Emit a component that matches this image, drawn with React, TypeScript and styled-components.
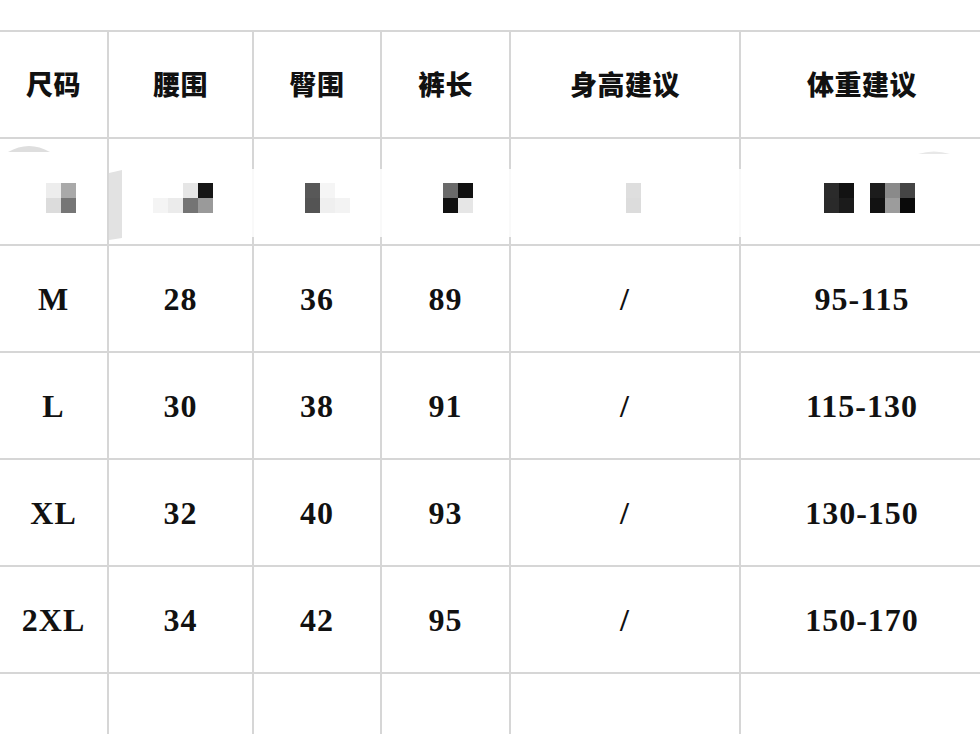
import styled, { createGlobalStyle } from 'styled-components'

const GlobalStyle = createGlobalStyle`
  html, body {
    margin: 0;
    padding: 0;
    background: #ffffff;
    overflow: hidden;
  }
`

const LINE = '#d6d6d6'

const Page = styled.div`
  width: 980px;
  height: 734px;
  padding-top: 30px;
  box-sizing: border-box;
  background: #ffffff;
  overflow: hidden;
`

const Table = styled.div`
  display: grid;
  grid-template-columns: 109px 145px 128px 129px 230px 244px;
  grid-auto-rows: 107px;
  width: 985px;
  border-top: 2px solid ${LINE};
`

const Cell = styled.div<{ $faint?: boolean }>`
  position: relative;
  display: flex;
  align-items: center;
  justify-content: center;
  box-sizing: border-box;
  border-right: 2px solid ${LINE};
  border-bottom: 2px solid ${LINE};
  color: #111111;

  ${p =>
    p.$faint &&
    `
    &::after {
      content: '';
      position: absolute;
      right: -2px;
      top: 30px;
      width: 2px;
      height: 68px;
      background: rgba(255, 255, 255, 0.85);
    }
  `}
`

const HeadText = styled.span`
  font-family: 'Noto Sans CJK SC', 'Noto Sans', sans-serif;
  font-weight: 900;
  font-size: 27px;
  letter-spacing: 0.5px;
  margin-top: -2px;
`

const DataText = styled.span`
  font-family: 'Liberation Serif', 'Times New Roman', serif;
  font-weight: 700;
  font-size: 32px;
  letter-spacing: 1px;
  margin-top: 1px;
`

const Mosaic = styled.svg`
  display: block;
  width: 100%;
  height: 100%;
`

type Tile = [number, number, string]

interface MosaicSpec {
  tiles: Tile[]
  extra?: React.ReactNode
}

const TILE = 15
const TOP = 44

const mosaics: MosaicSpec[] = [
  {
    tiles: [
      [46, 0, '#ededed'],
      [46, 1, '#dcdcdc'],
      [61, 0, '#a9a9a9'],
      [61, 1, '#767676'],
    ],
    extra: <path d="M8 13 Q29 1 50 13 Z" fill="#dedede" />,
  },
  {
    tiles: [
      [44, 1, '#f4f4f4'],
      [59, 1, '#ebebeb'],
      [74, 0, '#e6e6e6'],
      [74, 1, '#747474'],
      [89, 0, '#161616'],
      [89, 1, '#9a9a9a'],
    ],
    extra: <path d="M0 34 L13 31 L13 99 L0 101 Z" fill="#e2e2e2" />,
  },
  {
    tiles: [
      [51, 0, '#585858'],
      [51, 1, '#545454'],
      [66, 0, '#f5f5f5'],
      [66, 1, '#efefef'],
      [81, 1, '#f3f3f3'],
    ],
  },
  {
    tiles: [
      [61, 0, '#6a6a6a'],
      [61, 1, '#111111'],
      [76, 0, '#111111'],
      [76, 1, '#e6e6e6'],
    ],
  },
  {
    tiles: [
      [115, 0, '#dedede'],
      [115, 1, '#dcdcdc'],
    ],
  },
  {
    tiles: [
      [83, 0, '#2b2b2b'],
      [83, 1, '#2a2a2a'],
      [98, 0, '#121212'],
      [98, 1, '#1b1b1b'],
      [129, 0, '#1c1c1c'],
      [129, 1, '#121212'],
      [144, 0, '#8a8a8a'],
      [144, 1, '#9c9c9c'],
      [159, 0, '#454545'],
      [159, 1, '#0a0a0a'],
    ],
    extra: <path d="M177 15 Q193 10 209 15 Z" fill="#e8e8e8" />,
  },
]

const headers = ['尺码', '腰围', '臀围', '裤长', '身高建议', '体重建议']

const rows: string[][] = [
  ['M', '28', '36', '89', '/', '95-115'],
  ['L', '30', '38', '91', '/', '115-130'],
  ['XL', '32', '40', '93', '/', '130-150'],
  ['2XL', '34', '42', '95', '/', '150-170'],
]

const App = () => {
  return (
    <Page>
      <GlobalStyle />
      <Table>
        {headers.map(h => (
          <Cell key={h}>
            <HeadText>{h}</HeadText>
          </Cell>
        ))}
        {mosaics.map((m, i) => (
          <Cell key={`m${i}`} $faint={i > 0}>
            <Mosaic viewBox="0 0 244 105" preserveAspectRatio="xMinYMin slice">
              {m.extra}
              {m.tiles.map(([x, r, c], j) => (
                <rect key={j} x={x} y={TOP + r * TILE} width={TILE} height={TILE} fill={c} />
              ))}
            </Mosaic>
          </Cell>
        ))}
        {rows.map(row =>
          row.map((v, i) => (
            <Cell key={`${row[0]}-${i}`}>
              <DataText>{v}</DataText>
            </Cell>
          ))
        )}
        {headers.map(h => (
          <Cell key={`blank-${h}`} />
        ))}
      </Table>
    </Page>
  )
}

export default App
